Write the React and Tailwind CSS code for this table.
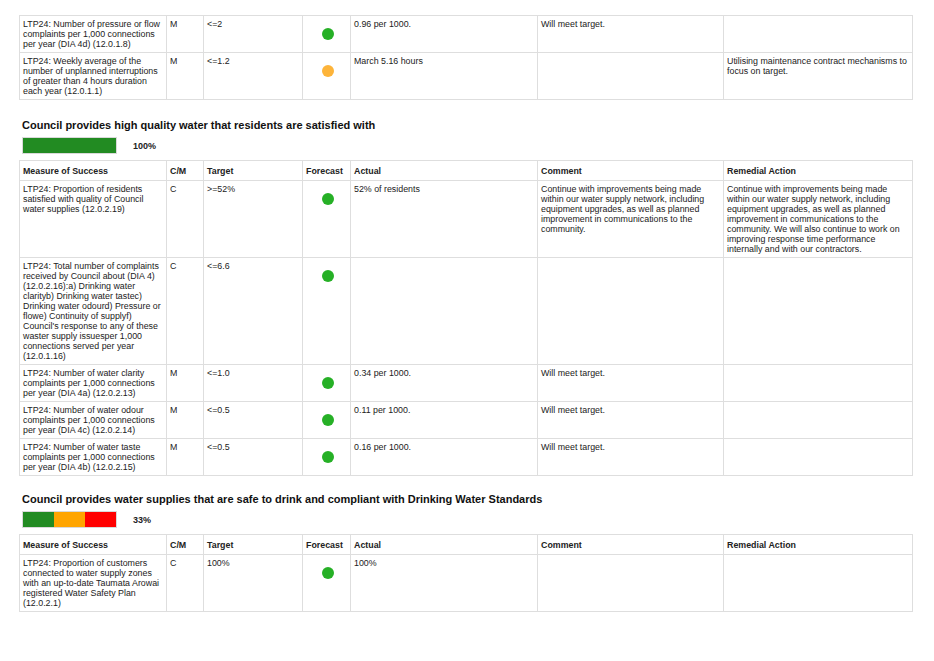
const GREEN = 'bg-[#26b026]';
const AMBER = 'bg-[#fdb43a]';

const firstRows = [
  {
    measure: 'LTP24: Number of pressure or flow complaints per 1,000 connections per year (DIA 4d)  (12.0.1.8)',
    cm: 'M',
    target: '<=2',
    forecast: 'green',
    actual: '0.96 per 1000.',
    comment: 'Will meet target.',
    remedial: '',
  },
  {
    measure: 'LTP24: Weekly average of the number of unplanned interruptions of greater than 4 hours duration each year (12.0.1.1)',
    cm: 'M',
    target: '<=1.2',
    forecast: 'amber',
    actual: 'March 5.16 hours',
    comment: '',
    remedial: 'Utilising maintenance contract mechanisms to focus on target.',
  },
];

const qualityRows = [
  {
    measure: 'LTP24: Proportion of residents satisfied with quality of Council water supplies (12.0.2.19)',
    cm: 'C',
    target: '>=52%',
    forecast: 'green',
    actual: '52% of residents',
    comment:
      'Continue with improvements being made within our water supply network, including equipment upgrades, as well as planned improvement in communications to the community.',
    remedial:
      'Continue with improvements being made within our water supply network, including equipment upgrades, as well as planned improvement in communications to the community. We will also continue to work on improving response time performance internally and with our contractors.',
  },
  {
    measure:
      "LTP24: Total number of complaints received by Council about (DIA 4) (12.0.2.16):a) Drinking water clarityb) Drinking water tastec) Drinking water odourd) Pressure or flowe) Continuity of supplyf) Council's response to any of these waster supply issuesper 1,000 connections served per year (12.0.1.16)",
    cm: 'C',
    target: '<=6.6',
    forecast: 'green',
    actual: '',
    comment: '',
    remedial: '',
  },
  {
    measure: 'LTP24: Number of water clarity complaints per 1,000 connections per year (DIA 4a) (12.0.2.13)',
    cm: 'M',
    target: '<=1.0',
    forecast: 'green',
    actual: '0.34 per 1000.',
    comment: 'Will meet target.',
    remedial: '',
  },
  {
    measure: 'LTP24: Number of water odour complaints per 1,000 connections per year (DIA 4c) (12.0.2.14)',
    cm: 'M',
    target: '<=0.5',
    forecast: 'green',
    actual: '0.11 per 1000.',
    comment: 'Will meet target.',
    remedial: '',
  },
  {
    measure: 'LTP24: Number of water taste complaints per 1,000 connections per year (DIA 4b) (12.0.2.15)',
    cm: 'M',
    target: '<=0.5',
    forecast: 'green',
    actual: '0.16 per 1000.',
    comment: 'Will meet target.',
    remedial: '',
  },
];

const safeRows = [
  {
    measure:
      'LTP24: Proportion of customers connected to water supply zones with an up-to-date Taumata Arowai registered Water Safety Plan (12.0.2.1)',
    cm: 'C',
    target: '100%',
    forecast: 'green',
    actual: '100%',
    comment: '',
    remedial: '',
  },
];

function Cols() {
  return (
    <colgroup>
      <col className="w-[147px]" />
      <col className="w-[37px]" />
      <col className="w-[99px]" />
      <col className="w-[48px]" />
      <col className="w-[187px]" />
      <col className="w-[186px]" />
      <col className="w-[189px]" />
    </colgroup>
  );
}

const cell = 'border border-[#dedede] pl-[3px] pr-[1px] pt-[3px] pb-[3px] align-top';

function Dot({ tone }) {
  return (
    <div className="flex justify-center pt-[9px]">
      <span className={`block h-[12px] w-[12px] rounded-full ${tone === 'amber' ? AMBER : GREEN}`} />
    </div>
  );
}

function Row({ row }) {
  return (
    <tr>
      <td className={cell}>{row.measure}</td>
      <td className={cell}>{row.cm}</td>
      <td className={cell}>{row.target}</td>
      <td className={cell}>
        <Dot tone={row.forecast} />
      </td>
      <td className={cell}>{row.actual}</td>
      <td className={cell}>{row.comment}</td>
      <td className={cell}>{row.remedial}</td>
    </tr>
  );
}

const head = 'border border-[#dedede] h-[20px] pl-[3px] pr-[1px] align-middle';

function Header() {
  return (
    <thead>
      <tr className="font-bold">
        <td className={head}>Measure of Success</td>
        <td className={head}>C/M</td>
        <td className={head}>Target</td>
        <td className={head}>Forecast</td>
        <td className={head}>Actual</td>
        <td className={head}>Comment</td>
        <td className={head}>Remedial Action</td>
      </tr>
    </thead>
  );
}

function MeasureTable({ rows, header = true }) {
  return (
    <table className="w-[893px] table-fixed border-collapse text-[8.85px] leading-[10px] text-[#222]">
      <Cols />
      {header && <Header />}
      <tbody>
        {rows.map((row, i) => (
          <Row key={i} row={row} />
        ))}
      </tbody>
    </table>
  );
}

function Section({ title, bar, pct, rows, className }) {
  return (
    <section className={className}>
      <h2 className="pl-[3px] text-[11px] font-bold leading-[14px] text-[#111]">{title}</h2>
      <div className="mt-[5px] flex h-[17px] items-center pl-[3px]">
        <div className="flex h-[17px] w-[95px] border border-[#d9d9d9]">{bar}</div>
        <span className="ml-[16px] text-[9px] font-bold leading-[10px] text-[#222]">{pct}</span>
      </div>
      <div className="mt-[6px]">
        <MeasureTable rows={rows} />
      </div>
    </section>
  );
}

export default function App() {
  return (
    <div className="min-h-[661px] bg-white pl-[19px] pt-[15px] font-['Liberation_Sans',Arial,sans-serif]">
      <MeasureTable rows={firstRows} header={false} />

      <Section
        className="mt-[18px]"
        title="Council provides high quality water that residents are satisfied with"
        pct="100%"
        bar={<div className="h-full w-full bg-[#228b22]" />}
        rows={qualityRows}
      />

      <Section
        className="mt-[16px]"
        title="Council provides water supplies that are safe to drink and compliant with Drinking Water Standards"
        pct="33%"
        bar={
          <>
            <div className="h-full flex-1 bg-[#228b22]" />
            <div className="h-full flex-1 bg-[#ffa500]" />
            <div className="h-full flex-1 bg-[#ff0000]" />
          </>
        }
        rows={safeRows}
      />
    </div>
  );
}
